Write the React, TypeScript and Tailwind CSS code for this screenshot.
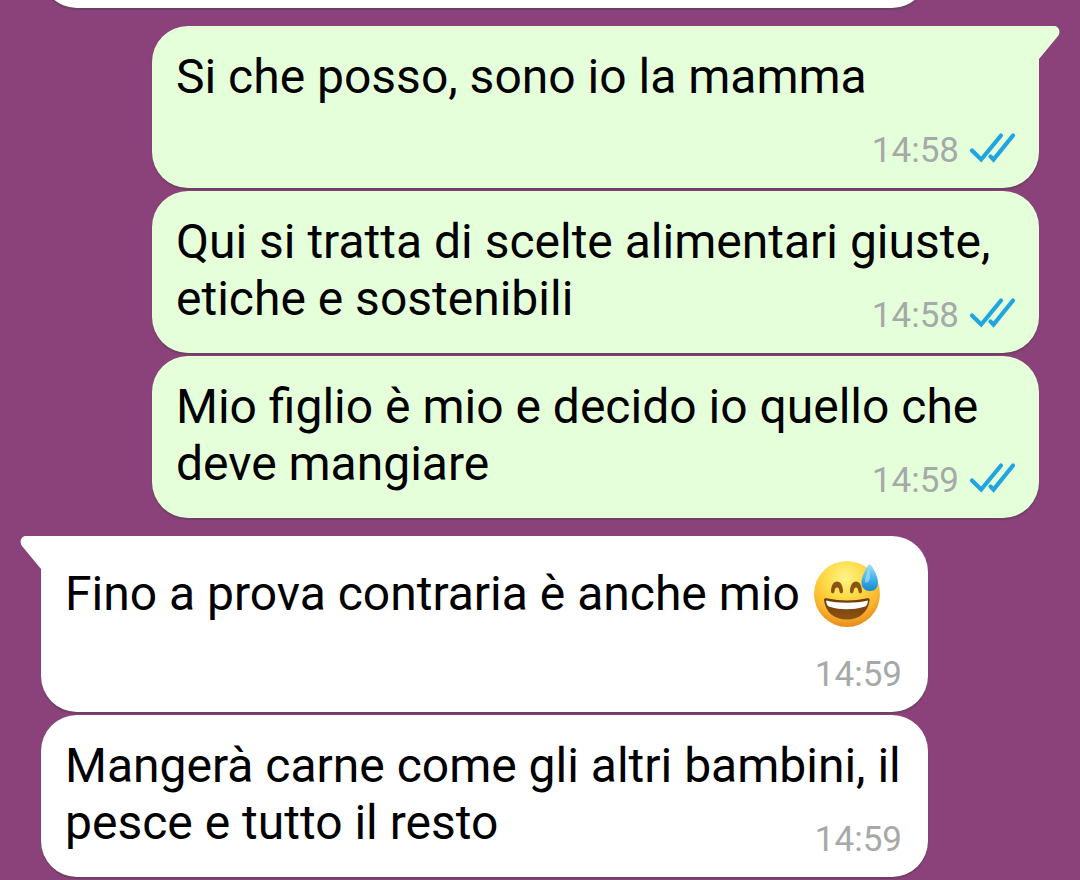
type Message = {
    id: number;
    text: string;
    time: string;
    mine: boolean;
    tail?: boolean;
    emoji?: boolean;
    short?: boolean;
};

const messages: Message[] = [
    {
        id: 1,
        text: "Si che posso, sono io la mamma",
        time: "14:58",
        mine: true,
        tail: true,
        short: true,
    },
    {
        id: 2,
        text: "Qui si tratta di scelte alimentari giuste, etiche e sostenibili",
        time: "14:58",
        mine: true,
    },
    {
        id: 3,
        text: "Mio figlio è mio e decido io quello che deve mangiare",
        time: "14:59",
        mine: true,
    },
    {
        id: 4,
        text: "Fino a prova contraria è anche mio",
        time: "14:59",
        mine: false,
        tail: true,
        emoji: true,
        short: true,
    },
    {
        id: 5,
        text: "Mangerà carne come gli altri bambini, il pesce e tutto il resto",
        time: "14:59",
        mine: false,
    },
];

function ReadTicks() {
    return (
        <svg
            viewBox="0 0 44 36"
            className="h-9 w-11 overflow-visible"
            fill="none"
            stroke="#1fa5e0"
            strokeWidth="4.2"
            strokeLinecap="round"
            strokeLinejoin="miter"
            role="img"
            aria-label="Letto"
        >
            <path d="M3 17.5 L12.2 26.5 L32 2.5" />
            <path d="M21.5 23.5 L24.5 26.5 L44 2.5" />
        </svg>
    );
}

function SweatSmile() {
    return (
        <svg viewBox="0 0 68 68" className="size-[68px] shrink-0" role="img" aria-label="😅">
            <defs>
                <radialGradient id="face" cx="0.47" cy="0.25" r="0.76">
                    <stop offset="0" stopColor="#fff48a" />
                    <stop offset="0.4" stopColor="#fddb45" />
                    <stop offset="0.75" stopColor="#f9b52d" />
                    <stop offset="1" stopColor="#e58a1c" />
                </radialGradient>
                <linearGradient id="mouth" x1="0" y1="0" x2="0" y2="1">
                    <stop offset="0" stopColor="#6b3a0c" />
                    <stop offset="1" stopColor="#8f5413" />
                </linearGradient>
                <linearGradient id="drop" x1="0" y1="0" x2="0" y2="1">
                    <stop offset="0" stopColor="#a9e2f8" />
                    <stop offset="0.5" stopColor="#48b6ea" />
                    <stop offset="1" stopColor="#1787cf" />
                </linearGradient>
            </defs>
            <circle cx="34" cy="34" r="33" fill="url(#face)" />
            <g fill="#8a5415">
                <path d="M18 31.5 C18 25.5 20.5 21.5 24 21.5 C27.5 21.5 30 25.5 30 31.5 C30 33.8 27 34 26.6 31.8 C26.2 29 25.5 27.5 24 27.5 C22.5 27.5 21.8 29 21.4 31.8 C21 34 18 33.8 18 31.5 Z" />
                <path d="M37 31.5 C37 25.5 39.5 21.5 43 21.5 C46.5 21.5 49 25.5 49 31.5 C49 33.8 46 34 45.6 31.8 C45.2 29 44.5 27.5 43 27.5 C41.5 27.5 40.8 29 40.4 31.8 C40 34 37 33.8 37 31.5 Z" />
            </g>
            <path
                d="M11 40 C11 38 12.5 38 15 38.5 C27 41 41 41 53 38.5 C55.5 38 57 38.3 56.6 40.5 C55 52.5 46 59.5 34 59.5 C22 59.5 12.5 53 11 40 Z"
                fill="url(#mouth)"
            />
            <path
                d="M13 40.5 C25 43.5 43 43.5 55 40.5 C54.5 45 53 46.5 50.5 47 C40 50 27 50 17.5 47 C15 46.5 13.5 45 13 40.5 Z"
                fill="#fff"
            />
            <path
                d="M56.5 4 C58.5 4 65 16 65 22.5 C65 28 61.5 31 57 31 C52 31 48.5 28 48.5 22.5 C48.5 16 55 4 56.5 4 Z"
                fill="url(#drop)"
            />
            <path d="M56 9 C54 14 51.5 18 52 22 C54 24 57 21 57 17 Z" fill="#d8f4fd" opacity="0.45" />
        </svg>
    );
}

function Tail({ mine }: { mine: boolean }) {
    return (
        <svg
            viewBox="0 0 22 34"
            className={
                mine
                    ? "absolute top-0 -right-[21px] h-[34px] w-[22px] text-[#e5ffdb]"
                    : "absolute top-0 -left-[21px] h-[34px] w-[22px] -scale-x-100 text-white"
            }
            aria-hidden="true"
        >
            <path d="M0 0 H16 C21 0 23 6 20 10 L1 33 H0 Z" fill="currentColor" />
        </svg>
    );
}

function Bubble({ message }: { message: Message }) {
    const { text, time, mine, tail, emoji, short } = message;

    return (
        <li
            className={`relative grid pr-[26px] pl-6 pt-[22px] pb-[17px] shadow-[0_2px_1px_rgba(60,60,60,0.35)] ${
                mine ? "ml-[152px] mr-[41px] bg-[#e5ffdb]" : "ml-[41px] mr-[152px] bg-white"
            } ${
                tail ? (mine ? "rounded-[36px] rounded-tr-none" : "rounded-[36px] rounded-tl-none") : "rounded-[36px]"
            }`}
        >
            {tail && <Tail mine={mine} />}

            <p
                className={`col-start-1 row-start-1 text-[48px] leading-[57px] text-black ${
                    short ? "pb-[26px]" : "pb-[9px]"
                } ${emoji ? "flex items-center gap-[13px]" : ""}`}
            >
                {text}
                {emoji && (
                    <span className="flex h-[71px] items-center">
                        <SweatSmile />
                    </span>
                )}
            </p>

            <div
                className={`col-start-1 flex items-center gap-[10px] self-end justify-self-end text-[35px] leading-[40px] text-[#a5aaa8] ${
                    short ? "row-start-2" : "row-start-1"
                }`}
            >
                <time>{time}</time>
                {mine && <ReadTicks />}
            </div>
        </li>
    );
}

function App() {
    const sent = messages.filter((message) => message.mine);
    const received = messages.filter((message) => !message.mine);

    return (
        <main className="min-h-screen overflow-hidden bg-[#8b4179] font-['Roboto',sans-serif]">
            {/* end of the previous message */}
            <div className="flex h-[18px] items-start px-[41px]">
                <div className="-mt-16 mr-[111px] h-[72px] flex-1 rounded-[36px] bg-white shadow-[0_2px_1px_rgba(60,60,60,0.35)]" />
            </div>

            <div className="flex flex-col gap-[18px] pt-2">
                <ul className="flex flex-col gap-[3px]">
                    {sent.map((message) => (
                        <Bubble key={message.id} message={message} />
                    ))}
                </ul>

                <ul className="flex flex-col gap-[3px]">
                    {received.map((message) => (
                        <Bubble key={message.id} message={message} />
                    ))}
                </ul>
            </div>
        </main>
    );
}

export default App;
